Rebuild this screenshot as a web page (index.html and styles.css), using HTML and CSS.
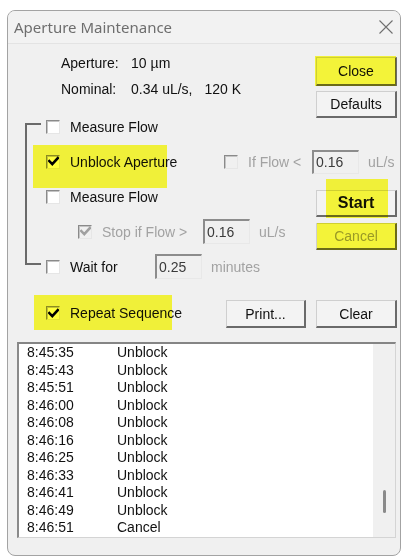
FILE: index.html
```html
<!DOCTYPE html>
<html lang="en">
<head>
<meta charset="utf-8">
<title>Aperture Maintenance</title>
<link rel="stylesheet" href="styles.css">
</head>
<body>
<div class="window">
  <div class="titlebar">
    <span class="title">Aperture Maintenance</span>
    <svg class="close-x" width="14" height="14" viewBox="0 0 14 14" aria-hidden="true">
      <path d="M0.5 0.5 L13.5 13.5 M13.5 0.5 L0.5 13.5" stroke="#707070" stroke-width="1.1" fill="none"/>
    </svg>
  </div>

  <div class="panel">
    <div class="info">
      <div class="info-row"><span class="info-key">Aperture:</span><span>10</span><span class="unit">µm</span></div>
      <div class="info-row"><span class="info-key">Nominal:</span><span>0.34 uL/s,</span><span class="count">120 K</span></div>
    </div>
    <button class="btn btn-close">Close</button>
    <button class="btn btn-defaults">Defaults</button>

    <div class="bracket"></div>

    <div class="row row-measure1"><span class="check"></span><span class="label">Measure Flow</span></div>

    <div class="row row-unblock"><span class="check checked"><svg viewBox="0 0 10 10"><path d="M1.2 4.6 L3.9 7.4 L8.9 1.9"/></svg></span><span class="label">Unblock Aperture</span></div>
    <div class="row row-ifflow">
      <span class="check disabled"></span>
      <span class="label dim lbl-ifflow">If Flow &lt;</span>
      <span class="field field-if">0.16</span>
      <span class="dim">uL/s</span>
    </div>

    <div class="row row-measure2"><span class="check"></span><span class="label">Measure Flow</span></div>
    <button class="btn btn-start">Start</button>

    <div class="row row-stop">
      <span class="check disabled checked"><svg viewBox="0 0 10 10"><path d="M1.2 4.6 L3.9 7.4 L8.9 1.9"/></svg></span>
      <span class="label dim lbl-stop">Stop if Flow &gt;</span>
      <span class="field">0.16</span>
      <span class="dim">uL/s</span>
    </div>
    <button class="btn btn-cancel" disabled>Cancel</button>

    <div class="row row-wait">
      <span class="check"></span>
      <span class="label lbl-wait">Wait for</span>
      <span class="field">0.25</span>
      <span class="dim">minutes</span>
    </div>

    <div class="row row-repeat"><span class="check checked"><svg viewBox="0 0 10 10"><path d="M1.2 4.6 L3.9 7.4 L8.9 1.9"/></svg></span><span class="label">Repeat Sequence</span></div>
    <button class="btn btn-print">Print...</button>
    <button class="btn btn-clear">Clear</button>
  </div>

  <div class="log">
    <div class="entries">
      <div class="entry"><span class="time">8:45:35</span><span>Unblock</span></div>
      <div class="entry"><span class="time">8:45:43</span><span>Unblock</span></div>
      <div class="entry"><span class="time">8:45:51</span><span>Unblock</span></div>
      <div class="entry"><span class="time">8:46:00</span><span>Unblock</span></div>
      <div class="entry"><span class="time">8:46:08</span><span>Unblock</span></div>
      <div class="entry"><span class="time">8:46:16</span><span>Unblock</span></div>
      <div class="entry"><span class="time">8:46:25</span><span>Unblock</span></div>
      <div class="entry"><span class="time">8:46:33</span><span>Unblock</span></div>
      <div class="entry"><span class="time">8:46:41</span><span>Unblock</span></div>
      <div class="entry"><span class="time">8:46:49</span><span>Unblock</span></div>
      <div class="entry"><span class="time">8:46:51</span><span>Cancel</span></div>
    </div>
    <div class="scrollbar"><div class="thumb"></div></div>
  </div>

  <!-- highlighter marks drawn over the dialog -->
  <span class="mark mark-close"></span>
  <span class="mark mark-unblock"></span>
  <span class="mark mark-start"></span>
  <span class="mark mark-cancel"></span>
  <span class="mark mark-repeat"></span>
</div>
</body>
</html>
```

FILE: styles.css
```css
body {
  margin: 0;
  background: #ffffff;
  font-family: "Liberation Sans", Arial, sans-serif;
  font-size: 14px;
  color: #111111;
}

.window {
  position: relative;
  box-sizing: border-box;
  width: 394px;
  height: 546px;
  margin: 10px 0 0 7px;
  border: 1px solid #a3a3a3;
  border-radius: 8px;
  background: #f0f0f0;
  overflow: hidden;
}

/* title bar */
.titlebar {
  display: flex;
  align-items: center;
  justify-content: space-between;
  height: 32px;
  padding: 0 7px 0 6px;
  border-bottom: 1px solid #e3e3e3;
  background: #f2f2f2;
}
.title {
  font-family: "Noto Sans", "Open Sans", sans-serif;
  font-size: 15px;
  color: #6e6e6e;
}
.close-x { display: block; }

/* main control grid */
.panel {
  display: grid;
  grid-template-columns: 216px 92px 81px;
  grid-template-rows: 43px 22px repeat(5, 35px) 58px;
}

.info {
  grid-column: 1 / 3;
  grid-row: 1 / 3;
  padding: 6px 0 0 53px;
  line-height: 26px;
}
.info-row { display: flex; white-space: nowrap; }
.info-key { width: 70px; }
.unit { margin-left: 4px; }
.count { margin-left: 12px; }

/* push buttons */
.btn {
  box-sizing: border-box;
  align-self: start;
  width: 81px;
  margin: 0;
  padding: 0;
  font: inherit;
  color: #111111;
  background: #f3f3f3;
  border-style: solid;
  border-width: 1px 2px 2px 1px;
  border-color: #cfcfcf #6a6a6a #6a6a6a #cfcfcf;
  border-radius: 0;
}
.btn:disabled { color: #9a9a9a; }
.btn-close    { grid-column: 3; grid-row: 1;     margin-top: 13px; height: 29px; }
.btn-defaults { grid-column: 3; grid-row: 2 / 4; margin-top: 4px;  height: 27px; }
.btn-start    { grid-column: 3; grid-row: 5;     margin-top: 11px; height: 27px; font-weight: bold; font-size: 16px; }
.btn-cancel   { grid-column: 3; grid-row: 6;     margin-top: 9px;  height: 27px; }
.btn-print    { grid-column: 2; grid-row: 8;     margin: 16px 0 0 2px; width: 80px; height: 28px; }
.btn-clear    { grid-column: 3; grid-row: 8;     margin-top: 16px; height: 28px; }

/* sequence bracket */
.bracket {
  grid-column: 1;
  grid-row: 3 / 8;
  width: 14px;
  margin: 14px 0 19px 17px;
  border: 2px solid #6a6a6a;
  border-right: none;
}

/* option rows */
.row {
  display: flex;
  align-items: center;
  white-space: nowrap;
}
.row-measure1 { grid-column: 1 / 3; grid-row: 3; padding-left: 38px; }
.row-unblock  { grid-column: 1;     grid-row: 4; padding-left: 38px; }
.row-ifflow   { grid-column: 2 / 4; grid-row: 4; }
.row-measure2 { grid-column: 1 / 3; grid-row: 5; padding-left: 38px; }
.row-stop     { grid-column: 1 / 3; grid-row: 6; padding-left: 70px; }
.row-wait     { grid-column: 1 / 3; grid-row: 7; padding-left: 38px; }
.row-repeat   { grid-column: 1;     grid-row: 8; padding-left: 38px; }

.label { margin-left: 10px; }
.lbl-ifflow { width: 64px; }
.lbl-stop   { width: 101px; }
.lbl-wait   { width: 85px; }
.dim { color: #a2a2a2; }

/* check boxes */
.check {
  box-sizing: border-box;
  display: inline-flex;
  align-items: center;
  justify-content: center;
  flex: none;
  width: 14px;
  height: 14px;
  background: #ffffff;
  border: 1px solid;
  border-color: #8a8a8a #e6e6e6 #e6e6e6 #8a8a8a;
  box-shadow: inset 1px 1px 0 #c4c4c4;
}
.check svg { width: 11px; height: 11px; }
.check path { fill: none; stroke: #000000; stroke-width: 2.3; stroke-linecap: square; }
.check.disabled { background: #f0f0f0; }
.check.disabled path { stroke: #a0a0a0; }

/* read-only value fields */
.field {
  box-sizing: border-box;
  display: inline-block;
  width: 47px;
  height: 25px;
  margin-right: 9px;
  padding-left: 2px;
  line-height: 22px;
  color: #3a3a3a;
  background: #f0f0f0;
  border-style: solid;
  border-width: 2px 1px 1px 2px;
  border-color: #8c8c8c #e8e8e8 #e8e8e8 #8c8c8c;
}
.field-if { height: 24px; line-height: 21px; }

/* event log list */
.log {
  box-sizing: border-box;
  display: flex;
  width: 379px;
  height: 196px;
  margin-left: 9px;
  border-style: solid;
  border-width: 2px 1px 1px 2px;
  border-color: #858585 #d4d4d4 #d4d4d4 #8a8a8a;
}
.entries {
  flex: 1;
  padding-left: 8px;
  background: #ffffff;
  line-height: 17.5px;
}
.entry { display: flex; }
.time { width: 90px; }
.scrollbar {
  box-sizing: border-box;
  width: 22px;
  padding-top: 146px;
  background: #f0f0f0;
}
.thumb {
  width: 3px;
  height: 23px;
  margin-left: 10px;
  border-radius: 2px;
  background: #8a8a8a;
}

/* yellow highlighter marks */
.mark {
  position: absolute;
  background: #ffff3c;
  mix-blend-mode: multiply;
}
.mark-close   { left: 307px; top: 45px;  width: 81px;  height: 30px; }
.mark-unblock { left: 25px;  top: 134px; width: 134px; height: 43px; }
.mark-start   { left: 318px; top: 168px; width: 62px;  height: 39px; }
.mark-cancel  { left: 309px; top: 212px; width: 80px;  height: 27px; }
.mark-repeat  { left: 26px;  top: 284px; width: 138px; height: 35px; }
```
